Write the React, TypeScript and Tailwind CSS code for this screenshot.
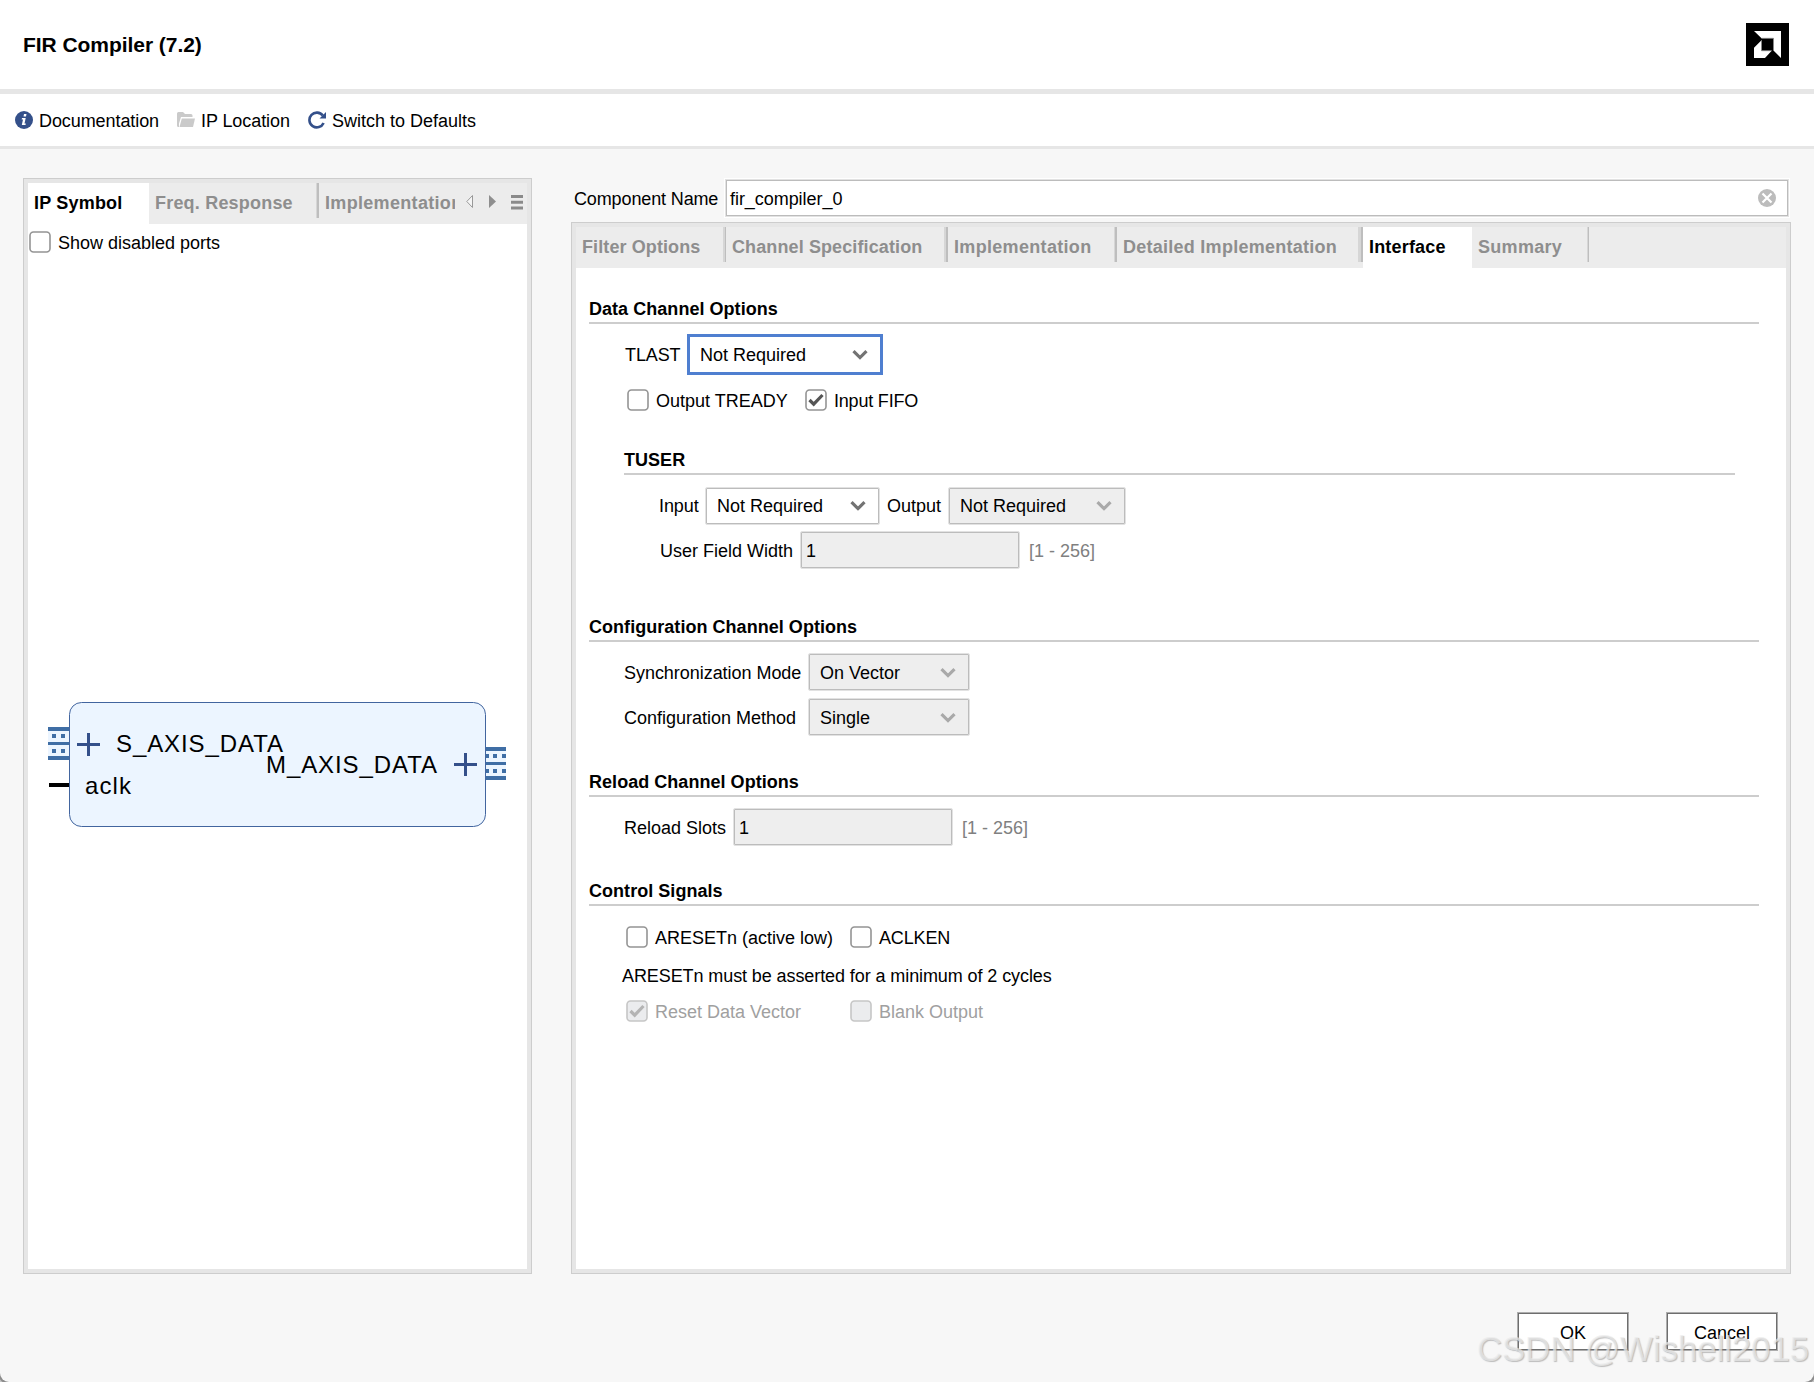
const tabs = [
  { label: "Filter Options", width: "w-[150px]", edge: "border-r tracking-[0.1px] shadow-[inset_-2px_0_#d6d6d6]" },
  { label: "Channel Specification", width: "w-[222px]", edge: "border-r-2 tracking-[0.11px] shadow-[inset_-2px_0_#d6d6d6]" },
  { label: "Implementation", width: "w-[169px]", edge: "border-r-2 tracking-[0.32px] shadow-[inset_-1px_0_#d6d6d6]" },
  { label: "Detailed Implementation", width: "w-[246px]", edge: "border-r-2 tracking-[0.26px] shadow-[inset_-3px_0_#d6d6d6]" },
  { label: "Interface", width: "w-[109px]", edge: "tracking-[0.18px]", active: true },
  { label: "Summary", width: "w-[117px]", edge: "border-r tracking-[0.3px] shadow-[inset_-1px_0_#d6d6d6]" },
];

function Chevron({ muted = false }) {
  return (
    <svg className="shrink-0" width="16" height="12" viewBox="0 0 16 12" fill="none">
      <path d="M1.500 2.200 8 8.600l6.500-6.400" stroke={muted ? "#a9a9a9" : "#737373"} strokeWidth="3.200" />
    </svg>
  );
}

function Select({ value, className = "", disabled = false }: { value: string; className?: string; disabled?: boolean }) {
  return (
    <div
      className={`flex h-[38px] items-center justify-between rounded-[2px] border border-[#e2e2e2] pr-[13px] pl-[11px] shadow-[inset_0_0_0_1px_#bcbcbc] ${
        disabled ? "bg-[#eeeeee]" : "bg-white"
      } ${className}`}
    >
      <span>{value}</span>
      <Chevron muted={disabled} />
    </div>
  );
}

function NumberField({ value }: { value: string }) {
  return (
    <div className="flex h-[38px] w-[220px] items-center rounded-[2px] border border-[#e2e2e2] bg-[#eeeeee] pt-[2px] pl-[5px] shadow-[inset_0_0_0_1px_#bcbcbc]">
      {value}
    </div>
  );
}

function Checkbox({ label, checked = false, disabled = false, className = "" }: {
  label: string;
  checked?: boolean;
  disabled?: boolean;
  className?: string;
}) {
  return (
    <div className={`flex h-[22px] items-center ${disabled ? "text-[#a0a0a0]" : ""} ${className}`}>
      <svg className="mr-[7px] shrink-0" width="22" height="22" viewBox="0 0 22 22">
        <rect
          x="1" y="1" width="20" height="20" rx="3.500"
          fill={disabled ? "#ebecee" : "#fff"}
          stroke={disabled ? "#c6c6c6" : "#949494"}
          strokeWidth="1.600"
        />
        {checked && (
          <path d="m4.500 11 4.200 4.200L17.500 6" fill="none" stroke={disabled ? "#b4b4b4" : "#555"} strokeWidth="3.200" />
        )}
      </svg>
      <span className="pt-[2px]">{label}</span>
    </div>
  );
}

function Heading({ children, className = "" }: { children: string; className?: string }) {
  return (
    <h2 className={`h-[26px] border-b-2 border-[#cdcdcd] pt-px font-bold leading-[20px] tracking-[0.04px] ${className}`}>
      {children}
    </h2>
  );
}

function IpSymbol() {
  return (
    <svg width="499" height="126" viewBox="28 702 499 126" fontFamily="Liberation Sans, Arial, sans-serif" fontSize="24">
      <rect x="69.500" y="702.500" width="416" height="124" rx="12" fill="#ecf5ff" stroke="#42659f" />
      {/* bus ports */}
      <path d="M48 727h21v33H48zM486 747h20v33h-20z" fill="#ecf5ff" />
      <g fill="#3f6ea5">
        <path d="M48 727h21v4H48zM48 742h21v3H48zM48 756h21v4H48z" />
        <path d="M52 734h4v4h-4zM61 734h4v4h-4zM52 749h4v4h-4zM61 749h4v4h-4z" />
        <path d="M486 747h20v4h-20zM486 762h20v3h-20zM486 776h20v4h-20z" />
        <path d="M486 754h3v4h-3zM493 754h4v4h-4zM502 754h4v4h-4zM486 769h3v4h-3zM493 769h4v4h-4zM502 769h4v4h-4z" />
      </g>
      <path d="M77 744.500h23M88.500 733v23M454 764.500h23M465.500 753v23" stroke="#34508a" strokeWidth="3" />
      <path d="M49 783h20v4H49z" />
      <text x="116" y="751.500" textLength="167">S_AXIS_DATA</text>
      <text x="266" y="772.500" textLength="171">M_AXIS_DATA</text>
      <text x="85" y="794" textLength="46">aclk</text>
    </svg>
  );
}

export default function App() {
  return (
    <div className="h-[1382px] w-[1814px] overflow-hidden bg-[#c4c4c4]">
      <div className="relative flex h-[1382px] w-[1814px] flex-col rounded-b-[9px] bg-[#f7f7f7] font-['Liberation_Sans',Arial,sans-serif] text-[18px] leading-[20px] whitespace-nowrap text-black shadow-[0_0_0_2px_#8c8c8c]">
        {/* Title */}
        <header className="flex h-[94px] shrink-0 items-center justify-between border-b-[5px] border-[#e6e6e6] bg-white pr-[25px] pl-[23px]">
          <h1 className="text-[21px] font-bold tracking-[-0.05px]">FIR Compiler (7.2)</h1>
          <svg width="43" height="43" viewBox="0 0 43 43">
            <path d="M0 0h43v43H0z" />
            <path d="M8 8h27v27l-7.500-7.500V15.300H15.500zM15.500 17.200v10.500h10.200L19 35H8V24.700z" fill="#fff" />
            <path d="M15.500 17.200v10.500h10.200M15.500 15.300h12v12.200" fill="none" stroke="#8a8a8a" strokeWidth=".8" />
          </svg>
        </header>

        {/* Toolbar */}
        <nav className="flex h-[55px] shrink-0 items-center border-b-[3px] border-[#e6e6e6] bg-white pl-[15px]">
          <div className="flex w-[162px] items-center gap-[6px]">
            <svg width="18" height="18" viewBox="0 0 18 18">
              <circle cx="9" cy="9" r="9" fill="#34508a" />
              <path d="M9 3h2.500l-.5 2.500H8.500zM7 7h3.700L9.500 12.500h1.300L10.500 14H6.800L8 8.500H6.700z" fill="#fff" />
            </svg>
            <span className="pt-[2px] tracking-[-0.08px]">Documentation</span>
          </div>
          <div className="flex w-[131px] items-center gap-[6px]">
            <svg width="18" height="16" viewBox="0 0 18 16" fill="#cacaca">
              <path d="M0 1.500Q0 0 1.500 0H6l2 2h6q1.500 0 1.500 1.500V5H4L2 11.500V15H1Q0 14.500 0 13.500z" />
              <path d="M4.800 6.500H18L16 15H2.500z" />
            </svg>
            <span className="pt-[2px] tracking-[-0.08px]">IP Location</span>
          </div>
          <div className="flex items-center gap-[6px]">
            <svg width="18" height="18" viewBox="0 0 18 18">
              <path d="M14.800 4.600A7.400 7.400 0 1 0 15.600 12" fill="none" stroke="#34508a" strokeWidth="2.600" />
              <path d="M18 1v6.500h-6.500z" fill="#34508a" />
            </svg>
            <span className="pt-[2px]">Switch to Defaults</span>
          </div>
        </nav>

        <main className="flex h-[1125px] shrink-0 pr-[23px] pl-[23px]">
          {/* IP symbol panel */}
          <section className="mt-[29px] h-[1096px] w-[509px] shrink-0 border border-[#cdcdcd] bg-[#e6e6e6] p-[4px]">
            <div className="flex h-full flex-col bg-white">
              <div className="flex h-[41px] shrink-0 items-start bg-[#ececec] font-bold tracking-[0.2px] text-[#8e8e8e]">
                <div className="h-[41px] w-[121px] bg-white pt-[10px] pl-[6px] text-black">IP Symbol</div>
                <div className="h-[35px] w-[170px] border-r-2 border-[#bebebe] pt-[10px] pl-[6px] shadow-[inset_-1px_0_#d6d6d6]">
                  Freq. Response
                </div>
                <div className="ml-[6px] w-[130px] overflow-hidden pt-[10px] tracking-[0.32px]">Implementation</div>
                <svg className="mt-[12px] ml-[11px]" width="60" height="16" viewBox="0 0 60 16">
                  <path d="M6.500 .5v12L.8 6.500z" fill="#f5f5f5" stroke="#999" />
                  <path d="M23 0v13l7-6.500z" fill="#8e8e8e" />
                  <path d="M45 0h12v3H45zM45 5.700h12v3H45zM45 11.500h12v3H45z" fill="#8a8a8a" />
                </svg>
              </div>
              <div className="mt-[7px] ml-[1px]">
                <Checkbox label="Show disabled ports" />
              </div>
              <div className="mt-[449px]">
                <IpSymbol />
              </div>
            </div>
          </section>

          <div className="ml-[39px] flex w-[1220px] shrink-0 flex-col pt-[29px]">
            {/* Component name */}
            <div className="flex h-[40px] shrink-0 items-center">
              <span className="w-[153px] pt-px pl-[3px] tracking-[-0.13px]">Component Name</span>
              <div className="mr-px h-[40px] flex-1 border border-white">
                <div className="flex h-full items-center justify-between border border-[#e2e2e2] bg-white pr-[12px] pl-[4px] shadow-[inset_0_0_0_1px_#bcbcbc]">
                  <span className="pt-px tracking-[-0.05px]">fir_compiler_0</span>
                  <svg width="18" height="18" viewBox="0 0 18 18">
                    <circle cx="9" cy="9" r="9" fill="#bcbcbc" />
                    <path d="m4.500 4.500 9 9M13.500 4.500l-9 9" stroke="#fff" strokeWidth="2.200" />
                  </svg>
                </div>
              </div>
            </div>

            {/* Options panel */}
            <section className="mt-[4px] h-[1052px] border border-[#cdcdcd] bg-[#e6e6e6] p-[4px]">
              <div className="h-full bg-white">
                <div className="flex h-[41px] items-start bg-[#ececec] font-bold">
                  {tabs.map((tab) => (
                    <div
                      key={tab.label}
                      className={`border-[#bebebe] pt-[10px] pl-[6px] ${tab.width} ${tab.edge} ${
                        tab.active ? "h-[41px] bg-white text-black" : "h-[35px] text-[#8e8e8e]"
                      }`}
                    >
                      {tab.label}
                    </div>
                  ))}
                </div>

                <div className="pr-[27px] pl-[13px]">
                  {/* Data channel */}
                  <Heading className="mt-[30px]">Data Channel Options</Heading>
                  <div className="mt-[10px] flex h-[41px] items-center pl-[36px]">
                    <span className="w-[62px] tracking-[-0.1px]">TLAST</span>
                    <div className="flex h-[41px] w-[196px] items-center justify-between border-[3px] border-[#4f7fd0] bg-white pr-[12px] pl-[10px]">
                      <span>Not Required</span>
                      <Chevron />
                    </div>
                  </div>
                  <div className="mt-[14px] flex pl-[38px]">
                    <Checkbox className="w-[178px]" label="Output TREADY" />
                    <Checkbox className="tracking-[-0.2px]" label="Input FIFO" checked />
                  </div>

                  <div className="mt-[38px] mr-[24px] ml-[35px]">
                    <Heading>TUSER</Heading>
                    <div className="mt-[12px] flex h-[38px] items-center pl-[35px]">
                      <span className="w-[46px] tracking-[-0.1px]">Input</span>
                      <Select className="w-[175px]" value="Not Required" />
                      <span className="w-[68px] pl-[7px]">Output</span>
                      <Select className="w-[178px]" value="Not Required" disabled />
                    </div>
                    <div className="mt-[6px] flex h-[38px] items-center pl-[36px]">
                      <span className="w-[140px] pt-[2px]">User Field Width</span>
                      <NumberField value="1" />
                      <span className="pt-[2px] pl-[9px] text-[#808080]">[1 - 256]</span>
                    </div>
                  </div>

                  {/* Configuration channel */}
                  <Heading className="mt-[47px]">Configuration Channel Options</Heading>
                  <div className="mt-[11px] flex flex-col gap-[7px] pl-[35px]">
                    <div className="flex items-center">
                      <span className="w-[184px] pt-[2px] tracking-[-0.04px]">Synchronization Mode</span>
                      <Select className="w-[162px] pt-[2px]" value="On Vector" disabled />
                    </div>
                    <div className="flex items-center">
                      <span className="w-[184px] pt-[2px]">Configuration Method</span>
                      <Select className="w-[162px] pt-[2px]" value="Single" disabled />
                    </div>
                  </div>

                  {/* Reload channel */}
                  <Heading className="mt-[35px]">Reload Channel Options</Heading>
                  <div className="mt-[11px] flex items-center pl-[35px]">
                    <span className="w-[109px] pt-[2px]">Reload Slots</span>
                    <NumberField value="1" />
                    <span className="pt-[2px] pl-[9px] text-[#808080]">[1 - 256]</span>
                  </div>

                  {/* Control signals */}
                  <Heading className="mt-[34px]">Control Signals</Heading>
                  <div className="mt-[20px] flex pl-[37px]">
                    <Checkbox className="w-[224px]" label="ARESETn (active low)" />
                    <Checkbox className="tracking-[-0.15px]" label="ACLKEN" />
                  </div>
                  <p className="mt-[18px] pl-[33px] tracking-[-0.09px]">
                    ARESETn must be asserted for a minimum of 2 cycles
                  </p>
                  <div className="mt-[14px] flex pl-[37px]">
                    <Checkbox className="w-[224px]" label="Reset Data Vector" checked disabled />
                    <Checkbox label="Blank Output" disabled />
                  </div>
                </div>
              </div>
            </section>
          </div>
        </main>

        <footer className="flex justify-end gap-[37px] pt-[38px] pr-[36px]">
          <button className="h-[39px] w-[112px] border border-[#adadad] bg-white pt-[2px] shadow-[inset_0_0_0_1px_#6e6e6e]">OK</button>
          <button className="h-[39px] w-[112px] border border-[#adadad] bg-white pt-[2px] shadow-[inset_0_0_0_1px_#6e6e6e]">Cancel</button>
        </footer>

        {/* Watermark */}
        <div className="absolute right-[5px] bottom-[13px] text-[34.700px] leading-[40px] text-[#ececec]/70 [text-shadow:1px_1px_1px_#8888]">
          CSDN @Wishell2015
        </div>
      </div>
    </div>
  );
}
